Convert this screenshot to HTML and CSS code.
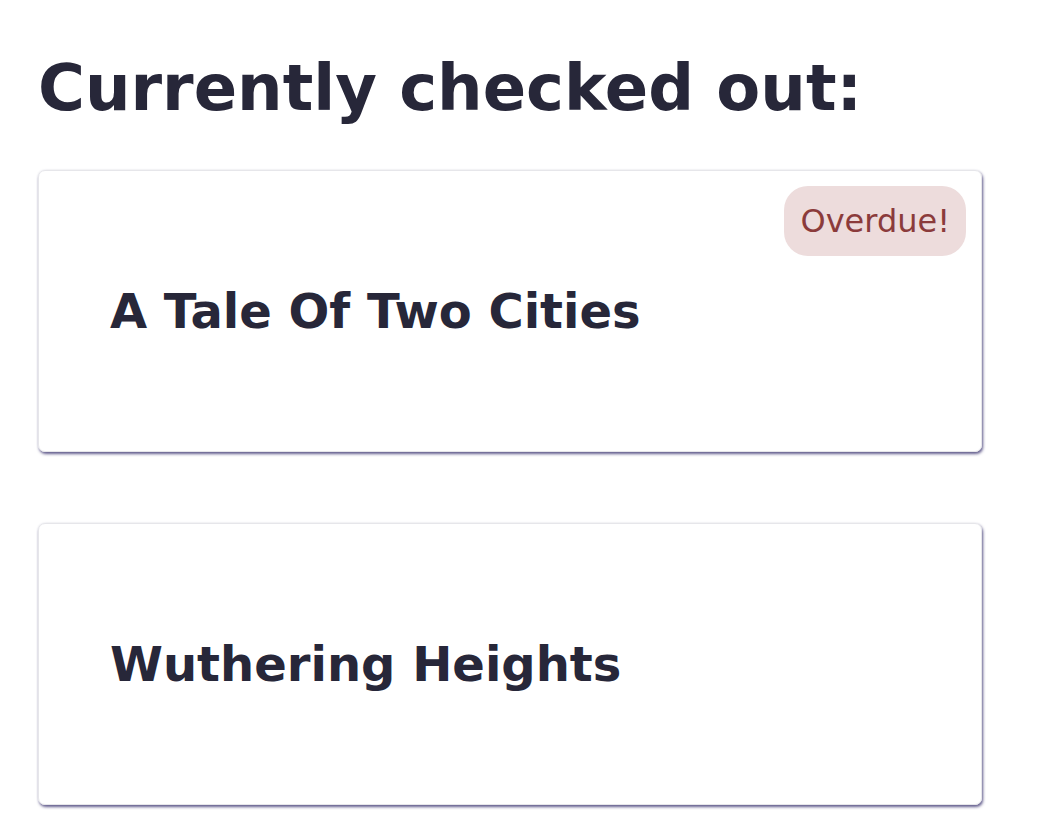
FILE: index.html
```html
<!DOCTYPE html>
<html>
<head>
<meta charset="utf-8">
<link rel="stylesheet" href="styles.css">
</head>
<body>
<main class="page">
  <h1 class="heading">Currently checked out:</h1>
  <ul class="list">
    <li class="card">
      <span class="badge">Overdue!</span>
      <h2 class="title">A Tale Of Two Cities</h2>
    </li>
    <li class="card">
      <h2 class="title">Wuthering Heights</h2>
    </li>
  </ul>
</main>
</body>
</html>
```
FILE: styles.css
```css
html, body {
  margin: 0;
  padding: 0;
  background: #ffffff;
}
body {
  font-family: "DejaVu Sans", sans-serif;
  color: #272739;
}
.page {
  padding: 0 74px 28px 38px;
}
.heading {
  font-size: 64px;
  font-weight: bold;
  margin: 52px 0 44px 0;
  line-height: 1.15;
}
.list {
  list-style: none;
  margin: 0;
  padding: 0;
  display: flex;
  flex-direction: column;
  gap: 71px;
}
.card {
  position: relative;
  height: 280px;
  border: 1px solid #e6e6ea;
  border-radius: 7px;
  box-shadow: 1px 2px 3px rgba(70, 64, 120, 0.85), 0 0 2px rgba(120, 120, 150, 0.15);
  display: flex;
  align-items: center;
  padding: 0 71px;
}
.title {
  margin: 0;
  font-size: 48px;
  font-weight: bold;
}
.badge {
  position: absolute;
  top: 15px;
  right: 15px;
  background: #eddcdc;
  color: #8b3b3b;
  font-size: 32px;
  padding: 0 16px;
  height: 70px;
  line-height: 70px;
  border-radius: 24px;
}
```
